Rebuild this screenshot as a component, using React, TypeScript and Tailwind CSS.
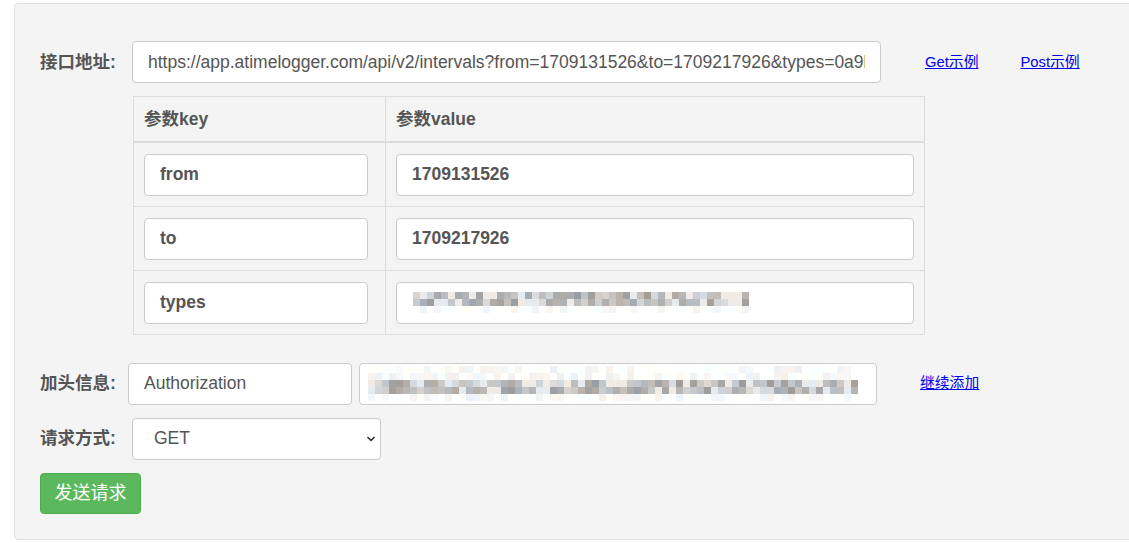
import React from 'react';
import { ChevronDown } from 'lucide-react';

const FONT = "font-['Liberation_Sans','Noto_Sans_CJK_SC',sans-serif]";

// pixelated redaction block, drawn as a mosaic of grey squares
const Mosaic: React.FC<{ cols: number; rows: number; cell: number; seed: number; dark: number[] }> = ({ cols, rows, cell, seed, dark }) => {
  let s = seed;
  const rnd = () => {
    s = (s * 9301 + 49297) % 233280;
    return s / 233280;
  };
  const rects: React.ReactNode[] = [];
  for (let r = 0; r < rows; r++) {
    for (let c = 0; c < cols; c++) {
      const v = rnd();
      const isDark = dark.includes(r);
      let g: number;
      if (isDark) g = v < 0.2 ? 235 : Math.round(140 + v * 80);
      else g = v < 0.6 ? 255 : Math.round(225 + v * 25);
      const tint = Math.round((rnd() - 0.5) * 14);
      rects.push(
        <rect key={`${r}-${c}`} x={c * cell} y={r * cell} width={cell} height={cell} fill={`rgb(${g + tint > 255 ? 255 : g + tint},${g},${g - tint < 0 ? 0 : Math.min(255, g - tint)})`} />
      );
    }
  }
  return (
    <svg width={cols * cell} height={rows * cell} className="block" shapeRendering="crispEdges">
      {rects}
    </svg>
  );
};

const Field: React.FC<{ value: string; className?: string; bold?: boolean }> = ({ value, className = '', bold }) => (
  <input
    readOnly
    value={value}
    className={`h-[42px] rounded-[4px] border border-[#ccc] bg-white px-[15px] text-[17.5px] text-[#555] outline-none ${bold ? 'font-bold' : ''} ${className}`}
  />
);

const ParamRow: React.FC<{ k: string; v?: string; last?: boolean }> = ({ k, v, last }) => (
  <tr className={last ? '' : 'border-b border-[#ddd]'}>
    <td className="border-r border-[#ddd] pl-[10px] pr-[16px] pt-[11px] pb-[10px]">
      <Field value={k} bold className="w-[224px]" />
    </td>
    <td className="pl-[10px] pr-[10px] pt-[11px] pb-[10px]">
      {v ? (
        <Field value={v} bold className="w-[518px]" />
      ) : (
        <div className="flex h-[42px] w-[518px] items-center rounded-[4px] border border-[#ccc] bg-white pl-[16px]">
          <Mosaic cols={48} rows={3} cell={7} seed={17} dark={[0, 1]} />
        </div>
      )}
    </td>
  </tr>
);

export default function App() {
  return (
    <div className={`${FONT} min-h-[543px] overflow-hidden bg-white pt-[3px] pl-[14px]`}>
      <div className="h-[537px] w-[1140px] rounded-[4px] border border-[#e3e3e3] bg-[#f4f4f4] pl-[25px] pt-[37px]">
        <div className="flex items-center">
          <span className="w-[92px] text-[17.5px] font-bold text-[#555]">接口地址:</span>
          <Field
            value="https://app.atimelogger.com/api/v2/intervals?from=1709131526&to=1709217926&types=0a9b"
            className="w-[749px]"
          />
          <a href="#" className="ml-[44px] text-[14.8px] text-[#0000ee] underline">Get示例</a>
          <a href="#" className="ml-[42px] text-[14.8px] text-[#0000ee] underline">Post示例</a>
        </div>

        <table className="ml-[93px] mt-[13px] w-[792px] border-collapse border border-[#ddd]">
          <thead>
            <tr className="border-b-2 border-[#ddd]">
              <th className="h-[45px] w-[252px] border-r border-[#ddd] pl-[10px] text-left text-[17.5px] font-bold text-[#555]">参数key</th>
              <th className="h-[45px] pl-[10px] text-left text-[17.5px] font-bold text-[#555]">参数value</th>
            </tr>
          </thead>
          <tbody>
            <ParamRow k="from" v="1709131526" />
            <ParamRow k="to" v="1709217926" />
            <ParamRow k="types" last />
          </tbody>
        </table>

        <div className="mt-[28px] flex items-center">
          <span className="w-[88px] text-[17.5px] font-bold text-[#555]">加头信息:</span>
          <Field value="Authorization" className="w-[224px]" />
          <div className="ml-[7px] flex h-[42px] w-[518px] items-center overflow-hidden rounded-[4px] border border-[#ccc] bg-white pl-[8px]">
            <Mosaic cols={70} rows={5} cell={7} seed={5} dark={[2, 3]} />
          </div>
          <a href="#" className="ml-[43px] text-[14.8px] text-[#0000ee] underline">继续添加</a>
        </div>

        <div className="mt-[13px] flex items-center">
          <span className="w-[92px] text-[17.5px] font-bold text-[#555]">请求方式:</span>
          <div className="relative">
            <select className="h-[42px] w-[249px] appearance-none rounded-[4px] border border-[#ccc] bg-white pl-[21px] text-[17.5px] text-[#555] outline-none">
              <option>GET</option>
              <option>POST</option>
            </select>
            <ChevronDown className="pointer-events-none absolute right-[4px] top-[15px] h-[12px] w-[12px] text-[#333]" strokeWidth={3.5} />
          </div>
        </div>

        <button className="mt-[13px] h-[41px] w-[101px] rounded-[4px] border border-[#4cae4c] bg-[#5cb85c] text-[18px] text-white">
          发送请求
        </button>
      </div>
    </div>
  );
}
